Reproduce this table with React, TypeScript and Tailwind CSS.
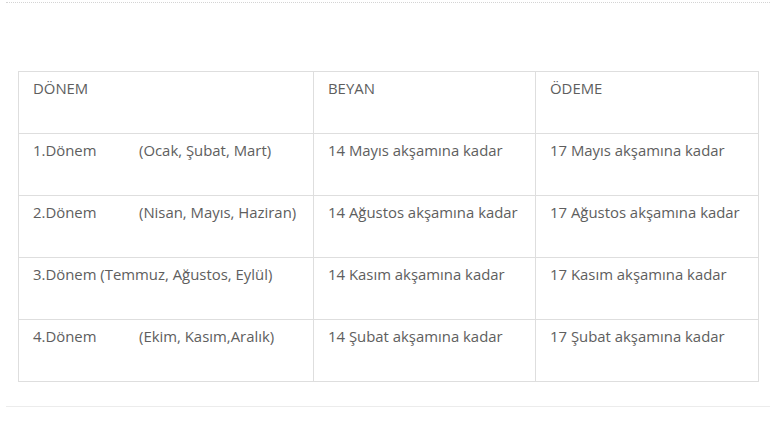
const rows = [
  { period: "1.Dönem", months: "(Ocak, Şubat, Mart)", gap: true, beyan: "14 Mayıs akşamına kadar", odeme: "17 Mayıs akşamına kadar" },
  { period: "2.Dönem", months: "(Nisan, Mayıs, Haziran)", gap: true, beyan: "14 Ağustos akşamına kadar", odeme: "17 Ağustos akşamına kadar" },
  { period: "3.Dönem", months: "(Temmuz, Ağustos, Eylül)", gap: false, beyan: "14 Kasım akşamına kadar", odeme: "17 Kasım akşamına kadar" },
  { period: "4.Dönem", months: "(Ekim, Kasım,Aralık)", gap: true, beyan: "14 Şubat akşamına kadar", odeme: "17 Şubat akşamına kadar" },
]

export default function App() {
  return (
    <div className="w-[770px] h-[434px] bg-white font-['Open_Sans',sans-serif] text-[14.9px] text-[#5e5e5e]">
      <div className="pt-[2px] pl-[6px]">
        <div className="border-t border-dotted border-[#d4d4d4]" />
      </div>

      <div className="pl-[18px] pr-[13px] pt-[68px]">
        <table className="w-[740px] border-collapse border border-[#dedede] table-fixed">
          <colgroup>
            <col className="w-[295px]" />
            <col className="w-[222px]" />
            <col className="w-[223px]" />
          </colgroup>
          <thead>
            <tr className="h-[62px]">
              <td className="border border-[#dedede] align-top pl-[14px] pt-[6px] leading-[20px]">DÖNEM</td>
              <td className="border border-[#dedede] align-top pl-[14px] pt-[6px] leading-[20px]">BEYAN</td>
              <td className="border border-[#dedede] align-top pl-[14px] pt-[6px] leading-[20px]">ÖDEME</td>
            </tr>
          </thead>
          <tbody>
            {rows.map((r) => (
              <tr key={r.period} className="h-[62px]">
                <td className="border border-[#dedede] align-top pl-[14px] pt-[6px] leading-[20px] whitespace-nowrap">
                  {r.gap ? (
                    <>
                      <span className="inline-block w-[106px]">{r.period}</span>
                      {r.months}
                    </>
                  ) : (
                    <>{r.period} {r.months}</>
                  )}
                </td>
                <td className="border border-[#dedede] align-top pl-[14px] pt-[6px] leading-[20px] whitespace-nowrap">{r.beyan}</td>
                <td className="border border-[#dedede] align-top pl-[14px] pt-[6px] leading-[20px] whitespace-nowrap">{r.odeme}</td>
              </tr>
            ))}
          </tbody>
        </table>
      </div>

      <div className="pt-[24px] pl-[6px]">
        <div className="border-t border-[#ececec]" />
      </div>
    </div>
  )
}
